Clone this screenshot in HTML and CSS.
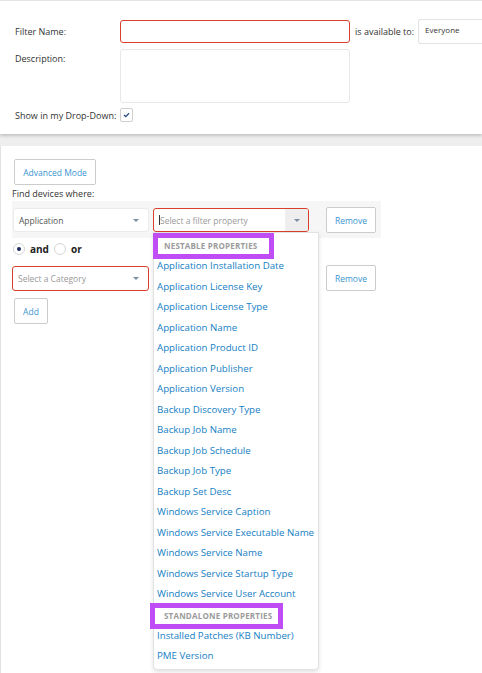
FILE: index.html
```html
<!DOCTYPE html>
<html lang="en">
<head>
    <meta charset="UTF-8">
    <meta name="viewport" content="width=device-width, initial-scale=1.0">
    <title>Device Filter</title>
    <link rel="stylesheet" href="styles.css">
</head>
<body>
    <div class="panel top-panel">
        <div class="filter-grid">
            <label class="field-label">Filter Name:</label>
            <div class="name-row">
                <input type="text" class="text-input invalid">
                <span class="avail-label">is available to:</span>
                <div class="avail-select">Everyone</div>
            </div>

            <label class="field-label desc-label">Description:</label>
            <textarea class="desc-input"></textarea>

            <label class="field-label">Show in my Drop-Down:</label>
            <div class="checkbox">
                <svg width="7" height="6" viewBox="0 0 7 6"><path d="M1 3 L2.8 4.6 L6 1.2" fill="none" stroke="#2a4a8a" stroke-width="1.3"/></svg>
            </div>
        </div>
    </div>

    <div class="panel main-panel">
        <button class="btn adv-btn">Advanced Mode</button>
        <div class="find-label">Find devices where:</div>

        <div class="rule-band">
            <div class="rule-row">
                <div class="select app-select">
                    <span>Application</span>
                    <span class="caret"></span>
                </div>
                <div class="select prop-select invalid">
                    <span class="placeholder"><span class="cursor"></span>Select a filter property</span>
                    <span class="caret-box"><span class="caret"></span></span>

                    <div class="dropdown">
                        <div class="group-head">
                            NESTABLE PROPERTIES
                            <div class="mark mark-nest"></div>
                        </div>
                        <div class="item">Application Installation Date</div>
                        <div class="item">Application License Key</div>
                        <div class="item">Application License Type</div>
                        <div class="item">Application Name</div>
                        <div class="item">Application Product ID</div>
                        <div class="item">Application Publisher</div>
                        <div class="item">Application Version</div>
                        <div class="item">Backup Discovery Type</div>
                        <div class="item">Backup Job Name</div>
                        <div class="item">Backup Job Schedule</div>
                        <div class="item">Backup Job Type</div>
                        <div class="item">Backup Set Desc</div>
                        <div class="item">Windows Service Caption</div>
                        <div class="item">Windows Service Executable Name</div>
                        <div class="item">Windows Service Name</div>
                        <div class="item">Windows Service Startup Type</div>
                        <div class="item">Windows Service User Account</div>
                        <div class="group-head">
                            STANDALONE PROPERTIES
                            <div class="mark mark-stand"></div>
                        </div>
                        <div class="item">Installed Patches (KB Number)</div>
                        <div class="item">PME Version</div>
                    </div>
                </div>
                <button class="btn remove-btn">Remove</button>
            </div>
        </div>

        <div class="logic-row">
            <span class="radio checked"></span>
            <span class="logic-text">and</span>
            <span class="radio"></span>
            <span class="logic-text">or</span>
        </div>

        <div class="rule-row cat-row">
            <div class="select cat-select invalid">
                <span class="placeholder">Select a Category</span>
                <span class="caret"></span>
            </div>
            <button class="btn remove-btn">Remove</button>
        </div>

        <button class="btn add-btn">Add</button>
    </div>
</body>
</html>
```

FILE: styles.css
```css
body {
    margin: 0;
    background-color: #eeeeee;
    font-family: "Open Sans", "Noto Sans", sans-serif;
    font-size: 9px;
    color: #333333;
    overflow: hidden;
}

.panel {
    background-color: white;
}

.top-panel {
    border-top: 1px solid #e4e4e4;
    height: 133px;
    box-shadow: 0 2px 3px rgba(0, 0, 0, 0.18);
}

.filter-grid {
    display: grid;
    grid-template-columns: 105px auto;
    row-gap: 5px;
    padding: 18px 0 0 15px;
    align-items: center;
}

.field-label {
    white-space: nowrap;
}

.name-row {
    display: flex;
    align-items: center;
    white-space: nowrap;
}

.text-input {
    flex-shrink: 0;
    width: 230px;
    height: 23px;
    box-sizing: border-box;
    border: 1px solid #e2e2e2;
    border-radius: 3px;
    margin: 0;
}

.invalid {
    border-color: #d6402c !important;
}

.avail-label {
    flex-shrink: 0;
    margin-left: 5px;
}

.avail-select {
    flex-shrink: 0;
    margin-left: 4px;
    width: 80px;
    height: 25px;
    box-sizing: border-box;
    border: 1px solid #e2e2e2;
    border-right: none;
    border-radius: 3px 0 0 3px;
    padding: 4px 0 0 6px;
    font-size: 8px;
}

.desc-label {
    align-self: start;
    padding-top: 3px;
}

.desc-input {
    width: 230px;
    height: 54px;
    box-sizing: border-box;
    border: 1px solid #e8e8e8;
    border-radius: 3px;
    margin: 0;
    resize: none;
}

.checkbox {
    width: 13px;
    height: 14px;
    box-sizing: border-box;
    border: 1px solid #cfcfcf;
    border-radius: 2px;
    display: flex;
    align-items: center;
    justify-content: center;
}

.main-panel {
    margin-top: 12px;
    border-left: 1px solid #e2e2e2;
    height: 540px;
    padding: 13px 0 0 11px;
}

.btn {
    display: block;
    background-color: white;
    border: 1px solid #cccccc;
    border-radius: 2px;
    color: #3b95d0;
    font-family: "Open Sans", "Noto Sans", sans-serif;
    font-size: 8.5px;
    padding: 0;
    cursor: pointer;
}

.adv-btn {
    width: 82px;
    height: 26px;
    margin-left: 2px;
}

.find-label {
    margin-top: 2px;
    line-height: 13px;
}

.rule-band {
    background-color: #f6f6f6;
    width: 369px;
    height: 37px;
    margin-top: 1px;
}

.rule-row {
    display: flex;
    align-items: center;
    padding-top: 6px;
}

.select {
    position: relative;
    height: 24px;
    box-sizing: border-box;
    border: 1px solid #ebebeb;
    border-radius: 3px;
    background-color: white;
    display: flex;
    align-items: center;
    justify-content: space-between;
    padding-left: 5px;
    font-size: 8.5px;
    color: #555555;
}

.app-select {
    width: 136px;
    margin-left: 1px;
    padding-right: 9px;
}

.prop-select {
    width: 156px;
    margin-left: 4px;
    padding: 0;
}

.prop-select .placeholder {
    padding-left: 5px;
}

.placeholder {
    color: #999999;
}

.cursor {
    display: inline-block;
    width: 1px;
    height: 10px;
    background-color: #333333;
    vertical-align: -1px;
}

.caret {
    width: 0;
    height: 0;
    border-left: 3px solid transparent;
    border-right: 3px solid transparent;
    border-top: 3px solid #7b8ea3;
}

.caret-box {
    width: 23px;
    height: 100%;
    background-color: #eeeeee;
    display: flex;
    align-items: center;
    justify-content: center;
    border-radius: 0 2px 2px 0;
}

.remove-btn {
    width: 50px;
    height: 26px;
    margin-left: 17px;
}

.logic-row {
    display: flex;
    align-items: center;
    height: 21px;
    padding-left: 1px;
}

.radio {
    width: 12px;
    height: 12px;
    box-sizing: border-box;
    border: 1px solid #d6d6d6;
    border-radius: 50%;
    background-color: white;
    display: flex;
    align-items: center;
    justify-content: center;
}

.radio.checked::after {
    content: "";
    width: 4px;
    height: 4px;
    border-radius: 50%;
    background-color: #1d2d5c;
}

.logic-text {
    font-weight: bold;
    font-size: 10px;
    color: #222222;
    margin: 0 5px 0 5px;
}

.cat-row {
    padding-top: 6px;
}

.cat-select {
    width: 137px;
    padding-right: 9px;
    height: 25px;
}

.cat-row .remove-btn {
    margin-left: 177px;
}

.add-btn {
    width: 34px;
    height: 26px;
    margin: 7px 0 0 2px;
}

.dropdown {
    position: absolute;
    top: 23px;
    left: -1px;
    width: 166px;
    box-sizing: border-box;
    background-color: white;
    border: 1px solid #e2e2e2;
    border-radius: 0 0 4px 4px;
    box-shadow: 0 2px 4px rgba(0, 0, 0, 0.12);
    padding: 2px 0 2px 0;
    z-index: 5;
}

.group-head {
    position: relative;
    height: 21px;
    line-height: 21px;
    padding-left: 10px;
    font-size: 8px;
    font-weight: bold;
    color: #9b9b9b;
    letter-spacing: 0.2px;
}

.mark {
    position: absolute;
    top: -2px;
    bottom: -3px;
    border: 5px solid #c04cf6;
}

.mark-nest {
    left: -1px;
    width: 111px;
}

.mark-stand {
    left: -4px;
    width: 123px;
}

.item {
    height: 20.5px;
    line-height: 20.5px;
    padding-left: 3px;
    font-size: 9.7px;
    color: #1580c4;
    white-space: nowrap;
}
```
